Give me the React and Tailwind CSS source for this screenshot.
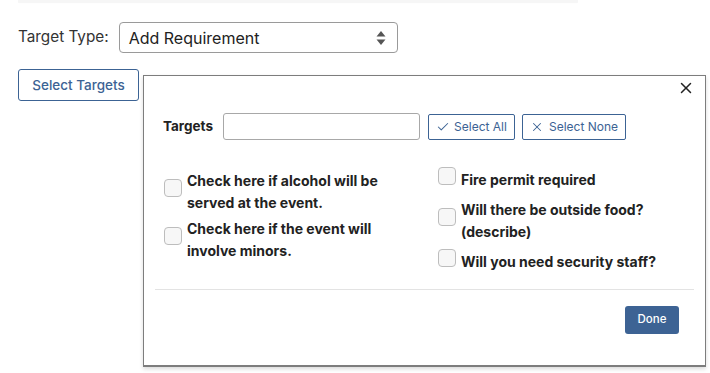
import { Check, X } from "lucide-react";

const leftItems = [
  "Check here if alcohol will be served at the event.",
  "Check here if the event will involve minors.",
];

const rightItems = [
  "Fire permit required",
  "Will there be outside food? (describe)",
  "Will you need security staff?",
];

function CheckItem({ label, lead }) {
  return (
    <label className="flex items-center gap-[5px]">
      <span className="-translate-y-[4px] h-[18px] w-[18px] shrink-0 rounded-[4px] border border-[#bdbdbd] bg-[#f7f7f7]" />
      <span className={`w-[215px] text-[14px] font-bold ${lead} text-[#222]`}>{label}</span>
    </label>
  );
}

export default function App() {
  return (
    <div className="relative h-[373px] w-[710px] overflow-hidden bg-white font-['Inter',sans-serif] text-[#222]">
      <div className="ml-[18px] h-[2px] w-[560px] bg-[#f6f6f6] shadow-[0_1px_1px_rgba(0,0,0,0.04)]" />

      <div className="ml-[18px] mt-[20px] flex items-center gap-[10px]">
        <span className="text-[15.3px] text-[#333]">Target Type:</span>
        <div className="flex h-[31px] w-[279px] items-center justify-between rounded-[4px] border border-[#9a9a9a] pl-[9px] pr-[11px]">
          <span className="text-[16px] text-[#222]">Add Requirement</span>
          <svg width="10" height="16" viewBox="0 0 10 16" fill="#555">
            <path d="M5 1 L9.5 6.5 H0.5 Z" />
            <path d="M5 15 L9.5 9.5 H0.5 Z" />
          </svg>
        </div>
      </div>

      <div className="ml-[18px] mt-[16px] flex items-start gap-[4px]">
        <button className="h-[32px] w-[121px] rounded-[3px] border border-[#3c6394] text-[13.5px] font-medium text-[#3c6394]">
          Select Targets
        </button>

        <div className="mt-[6px] flex h-[292px] w-[563px] flex-col border border-b-2 border-[#7d7d7d] bg-white shadow-[0_2px_4px_rgba(0,0,0,0.15)]">
          <div className="flex justify-end pr-[10px] pt-[3px]">
            <X className="h-[18px] w-[18px] text-[#222]" strokeWidth={2} />
          </div>

          <div className="ml-[19px] mt-[16px] flex items-center gap-[8px]">
            <span className="w-[52px] text-[13.5px] font-bold text-[#222]">Targets</span>
            <div className="h-[27px] w-[197px] rounded-[3px] border border-[#a8a8a8]" />
            <button className="flex h-[26px] w-[87px] items-center justify-center gap-[4px] rounded-[2px] border border-[#3c6394] text-[12px] text-[#3c6394]">
              <Check className="h-[14px] w-[14px]" strokeWidth={1.75} />
              Select All
            </button>
            <button className="-ml-[1px] flex h-[26px] w-[104px] items-center justify-center gap-[5px] rounded-[2px] border border-[#3c6394] text-[12px] text-[#3c6394]">
              <X className="h-[14px] w-[14px]" strokeWidth={1.75} />
              Select None
            </button>
          </div>

          <div className="ml-[20px] mt-[30px] flex">
            <div className="flex w-[274px] flex-col gap-[5px]">
              {leftItems.map((t) => (
                <CheckItem key={t} label={t} lead="leading-[21.5px]" />
              ))}
            </div>
            <div className="-mt-[1px] flex flex-col gap-[7px]">
              {rightItems.map((t) => (
                <CheckItem key={t} label={t} lead="leading-[22.5px]" />
              ))}
            </div>
          </div>

          <div className="mx-[11px] mt-auto h-px bg-[#e3e3e3]" />

          <div className="flex justify-end pb-[31px] pr-[26px] pt-[16px]">
            <button className="h-[28px] w-[54px] rounded-[3px] bg-[#3d6394] text-[11.5px] font-medium text-white">
              Done
            </button>
          </div>
        </div>
      </div>
    </div>
  );
}
